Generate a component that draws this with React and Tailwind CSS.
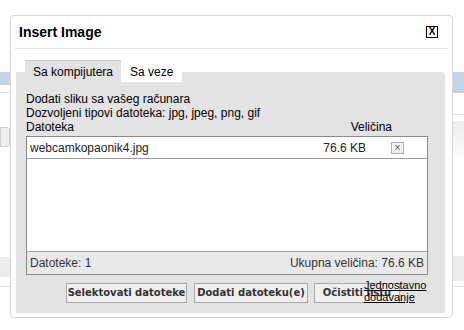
import React from 'react'

const Backdrop = () => (
  <div className="flex justify-between h-full">
    <div className="w-[10px] flex flex-col">
      <div className="h-[72px]" />
      <div className="h-[13px] bg-[#c4d6e2]" />
      <div className="h-[8px] border-b border-[#e2e2e2]" />
      <div className="h-[34px]" />
      <div className="h-[20px] bg-[#efefef] border border-[#d0d0d0] rounded-r-[3px]" />
      <div className="h-[110px]" />
      <div className="h-[20px] bg-[#ececec]" />
      <div className="h-[10px] border-b border-[#dedede]" />
    </div>
    <div className="w-[11px] flex flex-col">
      <div className="h-[72px]" />
      <div className="h-[21px] bg-[#c4d6e2]" />
      <div className="h-[22px] border-b border-[#e2e2e2]" />
      <div className="h-[6px]" />
      <div className="h-[35px] bg-gradient-to-b from-[#eeeeee] to-[#fbfbfb]" />
      <div className="h-[100px]" />
      <div className="h-[25px] bg-[#ececec]" />
      <div className="h-[6px] border-b border-[#dedede]" />
    </div>
  </div>
)

const Button = ({ children, className }) => (
  <button
    type="button"
    className={`h-[20px] border border-[#a8a8a8] bg-[#efefef] text-[10px] font-bold text-[#333] font-['DejaVu_Sans',Verdana,sans-serif] leading-none ${className}`}
  >
    {children}
  </button>
)

const App = () => {
  return (
    <div className="relative w-[464px] h-[330px] bg-white overflow-hidden font-['Liberation_Sans',Arial,sans-serif] text-black">
      <Backdrop />

      <div className="absolute left-[10px] top-[15px] w-[443px] h-[303px] bg-white border border-[#d6d6d6] rounded-[4px] flex flex-col">
        <div className="h-[32px] flex items-center justify-between pl-[8px] pr-[14px]">
          <span className="text-[14px] font-bold leading-none">Insert Image</span>
          <button
            type="button"
            className="w-[12px] h-[12px] border border-black bg-white flex items-center justify-center text-[10px] font-bold leading-none"
          >
            X
          </button>
        </div>
        <div className="mx-[4px] border-b border-[#e2e2e2]" />

        <div className="flex-1 flex flex-col pl-[5px] pr-[7px] pt-[11px] pb-[4px]">
          <div className="relative z-10 flex h-[22px] pl-[9px] text-[12px]">
            <div className="px-[8px] bg-[#e3e3e3] border-t border-[#c8c8c8] flex items-center">Sa kompijutera</div>
            <div className="mt-[2px] px-[9px] bg-white flex items-center">Sa veze</div>
          </div>

          <div className="relative flex-1 -mt-[10px] bg-[#e3e3e3] rounded-tr-[4px] pt-[20px] pl-[10px] pr-[17px] pb-[10px]">
            <div className="text-[12px] leading-[14px]">
              <div>Dodati sliku sa vašeg računara</div>
              <div>Dozvoljeni tipovi datoteka: jpg, jpeg, png, gif</div>
              <div className="flex justify-between">
                <span>Datoteka</span>
                <span className="mr-[36px]">Veličina</span>
              </div>
            </div>

            <div className="mt-[2px] border border-[#8a8a8a] bg-white flex flex-col text-[12px]">
              <div className="h-[22px] flex items-center pl-[3px] border-b border-[#a0a0a0] text-[#222]">
                <span className="flex-1">webcamkopaonik4.jpg</span>
                <span>76.6 KB</span>
                <button
                  type="button"
                  className="ml-[25px] mr-[23px] w-[13px] h-[12px] border border-[#b0b0b0] bg-[#f2f2f2] flex items-center justify-center text-[8px] leading-none text-[#333]"
                >
                  X
                </button>
              </div>
              <div className="h-[92px]" />
              <div className="h-[23px] border-t border-[#a0a0a0] bg-[#e9e9e9] flex items-center justify-between px-[3px] text-[#333]">
                <span>Datoteke: 1</span>
                <span>Ukupna veličina: 76.6 KB</span>
              </div>
            </div>

            <div className="mt-[8px] flex items-center pl-[40px]">
              <Button className="w-[121px]">Selektovati datoteke</Button>
              <Button className="ml-[7px] w-[114px]">Dodati datoteku(e)</Button>
              <Button className="ml-[6px] w-[86px]">Očistiti listu</Button>
            </div>

            <a
              href="#"
              className="absolute left-[348px] top-[207px] w-[68px] text-[11px] leading-[12px] underline text-black"
            >
              Jednostavno dodavanje
            </a>
          </div>
        </div>
      </div>
    </div>
  )
}

export default App
